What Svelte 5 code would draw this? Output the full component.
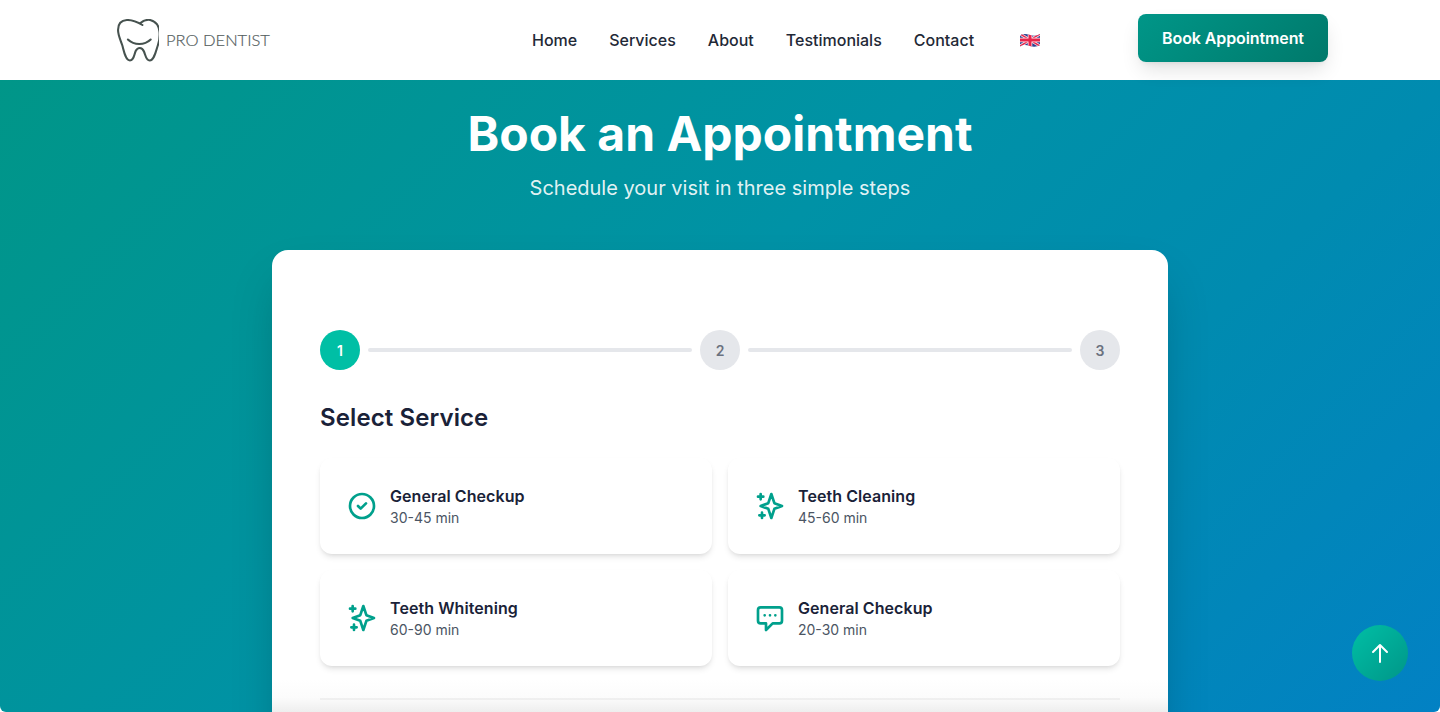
<script>
  const services = [
    { name: 'General Checkup', time: '30-45 min', icon: 'check' },
    { name: 'Teeth Cleaning', time: '45-60 min', icon: 'sparkle' },
    { name: 'Teeth Whitening', time: '60-90 min', icon: 'sparkle' },
    { name: 'General Checkup', time: '20-30 min', icon: 'chat' }
  ]

  const icons = {
    check: 'M9 12l2 2 4-4m6 2a9 9 0 11-18 0 9 9 0 0118 0z',
    sparkle: 'M5 3v4M3 5h4M6 17v4m-2-2h4m5-16l2.286 6.857L21 12l-5.714 2.143L13 21l-2.286-6.857L5 12l5.714-2.143L13 3z',
    chat: 'M8 10h.01M12 10h.01M16 10h.01M9 16H5a2 2 0 01-2-2V6a2 2 0 012-2h14a2 2 0 012 2v8a2 2 0 01-2 2h-5l-5 5v-5z'
  }

  const links = ['Home', 'Services', 'About', 'Testimonials', 'Contact']
</script>

<div class="page">
  <header class="nav">
    <div class="nav__inner">
      <a class="logo" href="#top">
        <svg class="logo__mark" width="42" height="43" viewBox="0 0 40.500 43" preserveAspectRatio="none" fill="none" stroke="#46524f" stroke-width="2" stroke-linecap="round" stroke-linejoin="round">
          <path d="M24.5 6C19 2.500 14 .8 9.500 1 4 1.300 1 5 1 11c0 5 2 9 4 15 1.500 5 3 15.500 7.500 15.500 4 0 4-6 5.500-9.500 1-2 2.500-3 4-3s3 1.200 4 3.500c1.500 3.500 2 9 5.500 9 4.500 0 6-9.500 8-15.500 1.500-4.500 1.800-9 1.500-13-.4-5-3-10.500-9-12-4-.8-7 1-9.500 3" />
          <path d="M10.500 20.500c3 3 7 4.500 11 4.500s8-1.500 11-4.500" />
        </svg>
        <span class="logo__text">PRO DENTIST</span>
      </a>
      <nav class="nav__links">
        {#each links as link}
          <a href="#top">{link}</a>
        {/each}
      </nav>
      <svg class="flag" width="20" height="14" viewBox="0 0 20 14">
        <defs>
          <clipPath id="wave">
            <path d="M0 2.500C3 .5 6 .8 10 2c4 1.200 7 .8 10-1v11c-3 1.800-6 2.200-10 1s-7-1.500-10 .5z" />
          </clipPath>
        </defs>
        <g clip-path="url(#wave)">
          <rect width="20" height="14" fill="#2b3f8f" />
          <path d="M0 1l20 12M20 1L0 13" stroke="#f4dfe4" stroke-width="3" />
          <path d="M0 1l20 12M20 1L0 13" stroke="#e8234a" stroke-width="1.500" />
          <path d="M10 0v14M0 7h20" stroke="#fbeef0" stroke-width="4.500" />
          <path d="M10 0v14M0 7h20" stroke="#e8234a" stroke-width="3" />
        </g>
      </svg>
      <button class="nav__cta">Book Appointment</button>
    </div>
  </header>

  <main class="hero">
    <h1 class="hero__title">Book an Appointment</h1>
    <p class="hero__subtitle">Schedule your visit in three simple steps</p>

    <section class="panel">
      <div class="steps">
        <span class="step step--active">1</span>
        <span class="steps__line"></span>
        <span class="step">2</span>
        <span class="steps__line"></span>
        <span class="step">3</span>
      </div>

      <h2 class="panel__title">Select Service</h2>

      <div class="services">
        {#each services as service}
          <button class="service">
            <svg class="service__icon" width="32" height="32" viewBox="0 0 24 24" fill="none" stroke="#00a08c" stroke-width="2" stroke-linecap="round" stroke-linejoin="round">
              <path d={icons[service.icon]} />
            </svg>
            <span class="service__text">
              <span class="service__name">{service.name}</span>
              <span class="service__time">{service.time}</span>
            </span>
          </button>
        {/each}
      </div>

      <div class="panel__footer"></div>
    </section>
  </main>

  <button class="to-top" aria-label="Back to top">
    <svg width="24" height="24" viewBox="0 0 24 24" fill="none" stroke="#fff" stroke-width="2" stroke-linecap="round" stroke-linejoin="round">
      <path d="M12 21V4M5 11l7-7 7 7" />
    </svg>
  </button>
</div>

<style>
  :global(body) {
    margin: 0;
    background: #fff;
    font-family: Inter, "Liberation Sans", sans-serif;
  }

  .page {
    position: relative;
    height: 712px;
    overflow: hidden;
    border-radius: 0 0 6px 6px;
  }

  .nav {
    height: 80px;
    background: #fff;
  }

  .nav__inner {
    display: flex;
    align-items: center;
    box-sizing: border-box;
    max-width: 1280px;
    height: 100%;
    margin: 0 auto;
    padding: 0 32px;
  }

  .logo {
    display: flex;
    align-items: center;
    gap: 7px;
    width: 155px;
    padding-left: 5px;
    color: #56615f;
    text-decoration: none;
  }

  .logo__text {
    font-family: Lato, sans-serif;
    font-size: 16.5px;
    font-weight: 300;
    -webkit-text-stroke: 0.2px #56615f;
    white-space: nowrap;
  }

  .nav__links {
    display: flex;
    gap: 32px;
    margin-left: 260px;
  }

  .nav__links a {
    color: #1f2937;
    font-size: 16px;
    font-weight: 500;
    line-height: 24px;
    text-decoration: none;
  }

  .flag {
    margin-left: 46px;
  }

  .nav__cta {
    margin-left: auto;
    margin-top: -4px;
    width: 190px;
    height: 48px;
    padding: 0;
    border: 0;
    border-radius: 8px;
    background: linear-gradient(135deg, #009688, #00796b);
    box-shadow: 0 10px 20px -3px rgba(0, 0, 0, 0.12), 0 4px 6px -4px rgba(0, 0, 0, 0.1);
    color: #fff;
    font-family: inherit;
    font-size: 16px;
    font-weight: 600;
    letter-spacing: -0.1px;
  }

  .hero {
    height: 632px;
    box-sizing: border-box;
    padding-top: 30px;
    background: linear-gradient(135deg, #009688, #0092a6 45%, #008bb0 70%, #0281c4);
    text-align: center;
  }

  .hero__title {
    margin: 0;
    color: #fff;
    font-size: 48px;
    font-weight: 700;
    line-height: 48px;
  }

  .hero__subtitle {
    margin: 16px 0 48px;
    color: rgba(255, 255, 255, 0.9);
    font-size: 20px;
    line-height: 28px;
  }

  .panel {
    position: relative;
    box-sizing: border-box;
    width: 896px;
    margin: 0 auto;
    padding: 80px 48px 48px;
    border-radius: 16px;
    background: #fff;
    box-shadow: 0 25px 50px -12px rgba(0, 0, 0, 0.25);
    text-align: left;
  }

  .panel::after {
    content: "";
    position: absolute;
    left: 0;
    right: 0;
    top: 430px;
    height: 32px;
    background: linear-gradient(rgba(238, 238, 238, 0), rgba(238, 238, 238, 0.2) 55%, #eee);
    pointer-events: none;
  }

  .steps {
    display: flex;
    align-items: center;
    gap: 8px;
  }

  .step {
    display: flex;
    align-items: center;
    justify-content: center;
    width: 40px;
    height: 40px;
    flex: none;
    border-radius: 50%;
    background: #e5e7eb;
    color: #6b7280;
    font-size: 14px;
    font-weight: 600;
  }

  .step--active {
    background: #00bfa5;
    color: #fff;
  }

  .steps__line {
    flex: 1;
    height: 4px;
    border-radius: 2px;
    background: #e5e7eb;
  }

  .panel__title {
    margin: 32px 0 24px;
    color: #1a2238;
    font-size: 24px;
    font-weight: 600;
    line-height: 32px;
    letter-spacing: 0.1px;
  }

  .services {
    display: grid;
    grid-template-columns: 1fr 1fr;
    gap: 16px;
  }

  .service {
    display: flex;
    align-items: center;
    gap: 12px;
    box-sizing: border-box;
    height: 96px;
    padding: 24px;
    border: 2px solid transparent;
    border-radius: 12px;
    background: #fff;
    box-shadow: 0 4px 6px -1px rgba(0, 0, 0, 0.1), 0 2px 4px -2px rgba(0, 0, 0, 0.1);
    font-family: inherit;
    text-align: left;
  }

  .service__icon {
    flex: none;
  }

  .service__text {
    display: flex;
    flex-direction: column;
  }

  .service__name {
    color: #1a2238;
    font-size: 16px;
    font-weight: 600;
    line-height: 24px;
    letter-spacing: 0.07px;
  }

  .service__time {
    color: #4b5563;
    font-size: 14px;
    line-height: 20px;
  }

  .panel__footer {
    height: 60px;
    margin-top: 32px;
    border-top: 2px solid #f0f0f0;
  }

  .to-top {
    position: absolute;
    right: 32px;
    bottom: 31px;
    display: flex;
    align-items: center;
    justify-content: center;
    width: 56px;
    height: 56px;
    padding: 0;
    border: 0;
    border-radius: 50%;
    background: linear-gradient(135deg, #00bfa5, #009688);
  }
</style>
